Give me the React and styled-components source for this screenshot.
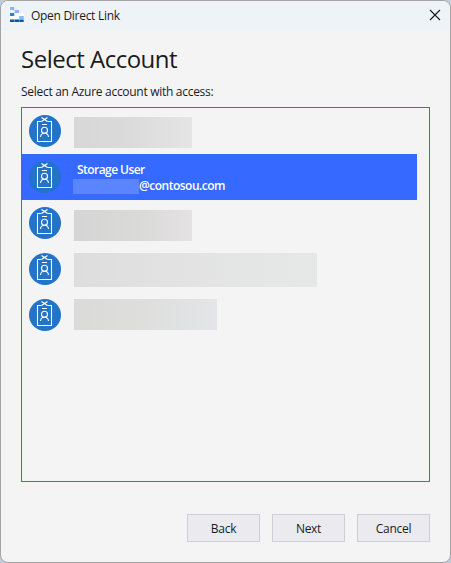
import React from "react";
import styled, { createGlobalStyle } from "styled-components";

const Global = createGlobalStyle`
  * { box-sizing: border-box; }
  body { margin: 0; background: #c3ccd6; font-family: "Open Sans", "Noto Sans", sans-serif; }
`;

const Dialog = styled.main`
  width: 451px;
  height: 563px;
  display: flex;
  flex-direction: column;
  background: #f4f4f4;
  border: 1px solid #a3a3a3;
  border-radius: 8px;
  overflow: hidden;
  color: #1b1b1b;
`;

const TitleBar = styled.header`
  height: 30px;
  flex: none;
  display: flex;
  align-items: center;
  padding: 0 9px 2px;
  background: #eef3f8;
`;

const Text = styled.span`
  display: block;
  white-space: nowrap;
  font-size: 12px;
  line-height: 16px;
  letter-spacing: ${(p) => p.$track ?? -0.29}px;
`;

const WindowTitle = styled(Text)`
  margin: 2px 0 0 7px;
  flex: 1;
`;

const CloseButton = styled.button`
  display: flex;
  padding: 0;
  border: 0;
  background: none;
`;

const Content = styled.section`
  flex: 1;
  display: flex;
  flex-direction: column;
  padding: 12px 20px 20px;
`;

const Heading = styled.h1`
  margin: 0;
  font-size: 24px;
  font-weight: 400;
  line-height: 32px;
  letter-spacing: -0.5px;
  white-space: nowrap;
`;

const Prompt = styled(Text)`
  margin-top: 9px;
`;

const AccountList = styled.ul`
  height: 375px;
  margin: 7px 0 0;
  padding: 0 12px 0 0;
  border: 1px solid #3b6be8;
  list-style: none;
`;

const AccountRow = styled.li`
  height: 46px;
  display: flex;
  align-items: flex-start;
  padding: 7px 0 0 7px;
  color: #fff;
  background: ${(p) => (p.$selected ? "#3569ff" : "transparent")};
`;

const Redacted = styled.div`
  width: ${(p) => p.$width}px;
  height: ${(p) => p.$height || 31}px;
  margin: ${(p) => p.$top}px 0 0 13px;
  background: ${(p) => p.$fill};
`;

const Details = styled.div`
  margin: 1px 0 0 12px;
  font-weight: 600;
`;

const UserName = styled(Text)`
  margin-left: 4px;
`;

const Email = styled.div`
  display: flex;
  align-items: center;
  height: 16px;
`;

const HiddenName = styled.div`
  width: 66px;
  height: 15px;
  background: #5b84ff;
`;

const Actions = styled.footer`
  display: flex;
  justify-content: flex-end;
  gap: 12px;
  margin-top: 32px;
`;

const Button = styled.button`
  width: 73px;
  height: 28px;
  padding: 2px 0 0;
  display: flex;
  justify-content: center;
  align-items: center;
  font-family: inherit;
  color: inherit;
  background: #ebebef;
  border: 1px solid #cccedb;
`;

const Logo = () => (
  <svg width="14" height="16" viewBox="0 0 14 16">
    <path fill="#83b9f9" d="M0 0h4.300v3H0zM4.700 3H9v3H4.700zM9.300 9h4.400v3H9.300z" />
    <path fill="#1988d9" d="M0 6h4.300v3H0z" />
    <path fill="#fff" d="M4.700 6H9v3H4.700zM9.300 6h4.400v3H9.300zM0 9.300h4.300v3H0zM4.700 9.300H9v3H4.700z" />
    <path fill="#005ba1" d="M0 12.600h4.300V15H0zM4.700 12.600H9V15H4.700zM9.300 12.600h4.400V15H9.300z" />
  </svg>
);

const Badge = () => (
  <svg width="32" height="32" viewBox="0 0 32 32">
    <circle cx="16" cy="16" r="16" fill="#2373c8" />
    <g fill="none" stroke="#fff" strokeWidth="1.1">
      <path d="M12.500 6.500h-4v20h14v-20h-4M13 9.500h5" />
      <path d="M12.500 2.500l3 2 3-2M12.500 6.500l3-2 3 2" />
      <circle cx="15.500" cy="15.200" r="3" />
      <path d="M11.500 22c.2-2.500 1.600-3.800 4-3.800s3.800 1.300 4 3.800" />
    </g>
  </svg>
);

const rows = [
  { width: 118, top: 2, fill: "linear-gradient(90deg,#d7d7d7,#dadada 45%,#e5e5e5)" },
  { selected: true },
  { width: 118, top: 3, fill: "linear-gradient(90deg,#d5d5d5,#dadad9 60%,#e5e2e3)" },
  { width: 243, top: 0, height: 34, fill: "linear-gradient(90deg,#dddddd,#e2e2e2 40%,#e6e8e7)" },
  { width: 143, top: 0, fill: "linear-gradient(90deg,#dadad8,#dededd 50%,#e3e5e8)" },
];

export default function App() {
  return (
    <Dialog>
      <Global />
      <TitleBar>
        <Logo />
        <WindowTitle>Open Direct Link</WindowTitle>
        <CloseButton aria-label="Close">
          <svg width="12" height="12" viewBox="0 0 12 12">
            <path d="M1 1l10 10M11 1L1 11" stroke="#191919" strokeWidth="1.1" />
          </svg>
        </CloseButton>
      </TitleBar>
      <Content>
        <Heading>Select Account</Heading>
        <Prompt>Select an Azure account with access:</Prompt>
        <AccountList>
          {rows.map((row, i) => (
            <AccountRow key={i} $selected={row.selected}>
              <Badge />
              {row.selected ? (
                <Details>
                  <UserName $track={-0.55}>Storage User</UserName>
                  <Email>
                    <HiddenName />
                    <Text $track={-0.5}>@contosou.com</Text>
                  </Email>
                </Details>
              ) : (
                <Redacted $width={row.width} $height={row.height} $top={row.top} $fill={row.fill} />
              )}
            </AccountRow>
          ))}
        </AccountList>
        <Actions>
          <Button><Text>Back</Text></Button>
          <Button><Text>Next</Text></Button>
          <Button><Text>Cancel</Text></Button>
        </Actions>
      </Content>
    </Dialog>
  );
}
